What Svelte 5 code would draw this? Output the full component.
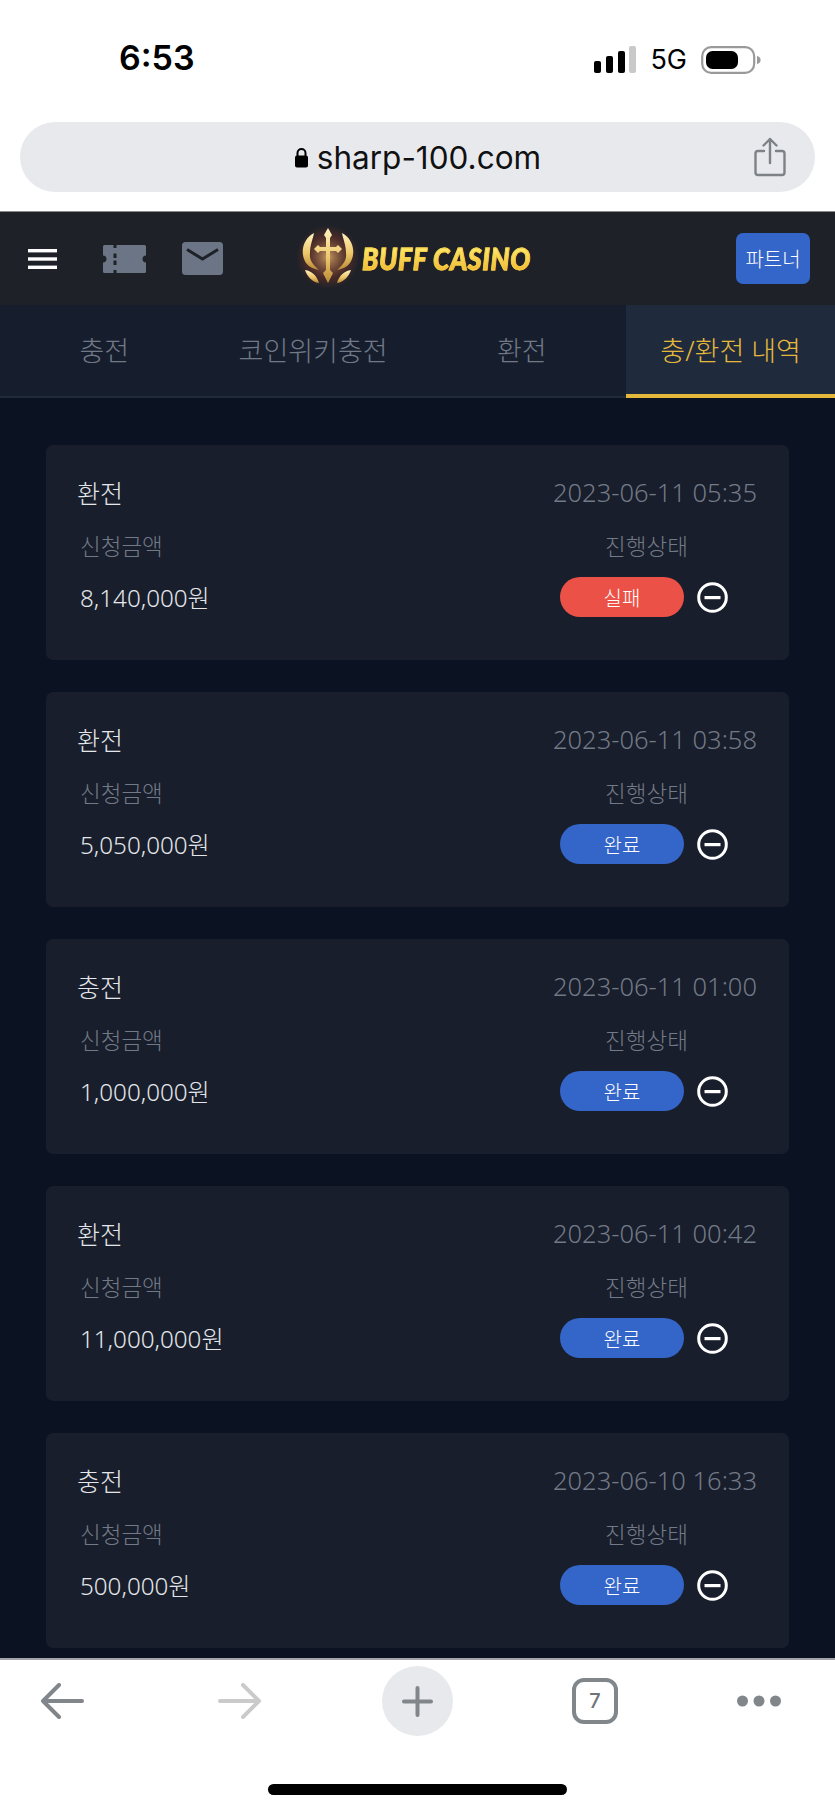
<script lang="ts">
  const tabs = ['충전', '코인위키충전', '환전', '충/환전 내역'];

  const history = [
    { type: '환전', date: '2023-06-11 05:35', amount: '8,140,000원', status: '실패' },
    { type: '환전', date: '2023-06-11 03:58', amount: '5,050,000원', status: '완료' },
    { type: '충전', date: '2023-06-11 01:00', amount: '1,000,000원', status: '완료' },
    { type: '환전', date: '2023-06-11 00:42', amount: '11,000,000원', status: '완료' },
    { type: '충전', date: '2023-06-10 16:33', amount: '500,000원', status: '완료' }
  ];
</script>

<div class="page">
  <div class="statusbar">
    <span class="time">6:53</span>
    <div class="status-right">
      <svg width="42" height="27" viewBox="0 0 42 27">
        <rect x="0" y="15" width="7" height="12" rx="2" fill="#000" />
        <rect x="12" y="10" width="7" height="17" rx="2" fill="#000" />
        <rect x="24" y="5" width="7" height="22" rx="2" fill="#000" />
        <rect x="35" y="0" width="7" height="27" rx="2" fill="#c9c9c9" />
      </svg>
      <span class="net">5G</span>
      <svg width="60" height="28" viewBox="0 0 60 28">
        <rect x="1.200" y="1.200" width="52" height="25.600" rx="9" fill="none" stroke="#9a9a9a" stroke-width="2.200" />
        <rect x="5" y="5" width="32" height="18" rx="6.500" fill="#000" />
        <path d="M56 10c2.400.6 3.600 2 3.600 4s-1.200 3.400-3.600 4z" fill="#9a9a9a" />
      </svg>
    </div>
  </div>

  <div class="urlwrap">
    <div class="urlbar">
      <span class="url">
        <svg width="15" height="21" viewBox="0 0 15 21">
          <path d="M3.500 9V6a4 4 0 0 1 8 0v3" fill="none" stroke="#000" stroke-width="2" />
          <rect x="1" y="8.500" width="13" height="12" rx="2" fill="#000" />
        </svg>
        sharp-100.com
      </span>
      <svg class="share" width="32" height="40" viewBox="0 0 32 40" fill="none" stroke="#7d8287" stroke-width="2.400" stroke-linecap="round" stroke-linejoin="round">
        <path d="M10 14H4a2.500 2.500 0 0 0-2.500 2.500v19A2.500 2.500 0 0 0 4 38h24a2.500 2.500 0 0 0 2.500-2.500v-19A2.500 2.500 0 0 0 28 14h-6" />
        <path d="M16 26V2M9.500 8.500 16 2l6.500 6.500" />
      </svg>
    </div>
  </div>

  <header class="topbar">
    <div class="menu-icons">
      <svg class="burger" width="29" height="20" viewBox="0 0 29 20" fill="#fff">
        <rect x="0" y="0" width="29" height="3.400" />
        <rect x="0" y="8.300" width="29" height="3.400" />
        <rect x="0" y="16.600" width="29" height="3.400" />
      </svg>
      <svg width="43" height="28" viewBox="0 0 43 28">
        <path fill="#6c7585" fill-rule="evenodd" d="M1.500 0H10.500V3H13.500V0H41.500A1.500 1.500 0 0 1 43 1.500V10.500A3.500 3.500 0 0 0 43 17.500V26.500A1.500 1.500 0 0 1 41.500 28H13.500V25H10.500V28H1.500A1.500 1.500 0 0 1 0 26.500V17.500A3.500 3.500 0 0 0 0 10.500V1.500A1.500 1.500 0 0 1 1.500 0ZM10.500 8.500V13H13.500V8.500ZM10.500 15.500V20H13.500V15.500Z" />
      </svg>
      <svg width="41" height="33" viewBox="0 0 41 33">
        <rect width="41" height="33" rx="3.500" fill="#6c7585" />
        <path d="M5 7.500 20.500 17 36 7.500" fill="none" stroke="#1e2128" stroke-width="3" />
      </svg>
    </div>

    <div class="logo">
      <svg width="64" height="64" viewBox="0 0 64 64">
        <defs>
          <radialGradient id="glow">
            <stop offset="0" stop-color="#f0b870" stop-opacity="0.8" />
            <stop offset="0.65" stop-color="#8a3a28" stop-opacity="0.4" />
            <stop offset="1" stop-color="#8a3a28" stop-opacity="0" />
          </radialGradient>
          <linearGradient id="gold" x1="0" y1="0" x2="0" y2="1">
            <stop offset="0" stop-color="#fff4c0" />
            <stop offset="0.55" stop-color="#edc76a" />
            <stop offset="1" stop-color="#b98a36" />
          </linearGradient>
        </defs>
        <circle cx="32" cy="32" r="32" fill="url(#glow)" />
        <path fill="url(#gold)" d="M18 8C8 13 3 27 10 38c3 4 8 6 13 7-6-5-10-10-9-17 0-8 3-14 4-20zM46 8c10 5 15 19 8 30-3 4-8 6-13 7 6-5 10-10 9-17 0-8-3-14-4-20z" />
        <path fill="url(#gold)" d="M32 3l4 7-2 3v9h6l2-2 4 4-4 4-2-2h-6v19l3 3-5 10-5-10 3-3V26h-6l-2 2-4-4 4-4 2 2h6v-9l-2-3z" />
        <path fill="url(#gold)" d="M9 45c7 1 12 6 14 13-7-1-12-7-14-13zM55 45c-7 1-12 6-14 13 7-1 12-7 14-13z" />
      </svg>
      <span class="logo-text">BUFF CASINO</span>
    </div>

    <button class="partner">파트너</button>
  </header>

  <nav class="tabs">
    {#each tabs as tab, i}
      <div class="tab" class:active={i === tabs.length - 1}>{tab}</div>
    {/each}
  </nav>

  <main class="list">
    {#each history as item}
      <section class="card">
        <div class="row top">
          <span class="type">{item.type}</span>
          <span class="date">{item.date}</span>
        </div>
        <div class="row bottom">
          <div class="col">
            <span class="label">신청금액</span>
            <span class="amount">{item.amount}</span>
          </div>
          <div class="col right">
            <span class="label status-label">진행상태</span>
            <div class="state">
              <span class="pill" class:failed={item.status === '실패'}>{item.status}</span>
              <svg width="31" height="31" viewBox="0 0 31 31">
                <circle cx="15.500" cy="15.500" r="13.800" fill="none" stroke="#fff" stroke-width="3" />
                <rect x="7.500" y="14" width="16" height="3.200" fill="#fff" />
              </svg>
            </div>
          </div>
        </div>
      </section>
    {/each}
  </main>

  <footer class="toolbar">
    <div class="tools">
      <svg class="back" width="44" height="36" viewBox="0 0 44 36" fill="none" stroke="#81868b" stroke-width="4" stroke-linecap="round" stroke-linejoin="round">
        <path d="M42 18H3M19 2 3 18l16 16" />
      </svg>
      <svg width="44" height="36" viewBox="0 0 44 36" fill="none" stroke="#cacaca" stroke-width="4" stroke-linecap="round" stroke-linejoin="round">
        <path d="M2 18h39M25 2l16 16-16 16" />
      </svg>
      <div class="plus">
        <svg width="31" height="31" viewBox="0 0 31 31" fill="none" stroke="#81868b" stroke-width="4" stroke-linecap="round">
          <path d="M15.500 2v27M2 15.500h27" />
        </svg>
      </div>
      <div class="tabcount">7</div>
      <svg width="44" height="12" viewBox="0 0 44 12" fill="#81868b">
        <circle cx="5.500" cy="6" r="5.500" />
        <circle cx="22" cy="6" r="5.500" />
        <circle cx="38.500" cy="6" r="5.500" />
      </svg>
    </div>
    <div class="home"></div>
  </footer>
</div>

<style>
  :global(body) {
    margin: 0;
    background: #fff;
  }

  .page {
    width: 835px;
    height: 1810px;
    display: flex;
    flex-direction: column;
    overflow: hidden;
    font-family: "Noto Sans", "Noto Sans CJK KR", sans-serif;
  }

  .statusbar {
    height: 122px;
    box-sizing: border-box;
    padding: 40px 74px 0 119px;
    display: flex;
    justify-content: space-between;
    align-items: flex-start;
    font-family: Inter, "Liberation Sans", sans-serif;
    color: #000;
  }

  .time {
    font-size: 34px;
    font-weight: 600;
    line-height: 36px;
  }

  .status-right {
    display: flex;
    align-items: center;
    gap: 14px;
    padding-top: 3px;
  }

  .net {
    font-size: 27px;
    font-weight: 400;
  }

  .urlwrap {
    height: 89px;
    padding: 0 20px;
  }

  .urlbar {
    position: relative;
    height: 70px;
    border-radius: 35px;
    background: #e8e9ed;
    display: flex;
    align-items: center;
    justify-content: center;
  }

  .url {
    display: flex;
    align-items: center;
    gap: 8px;
    font-family: Inter, "Liberation Sans", sans-serif;
    font-size: 31.500px;
    color: #111;
  }

  .share {
    position: absolute;
    right: 29px;
    top: 15px;
  }

  .topbar {
    height: 94px;
    box-sizing: border-box;
    border-top: 1px solid #8a8a8a;
    background: #1e2128;
    position: relative;
    display: flex;
    align-items: center;
    justify-content: space-between;
    padding: 0 25px 0 28px;
  }

  .menu-icons {
    display: flex;
    align-items: center;
    gap: 36px;
  }

  .burger {
    margin-right: 10px;
  }

  .logo {
    position: absolute;
    left: 296px;
    top: 13px;
    display: flex;
    align-items: center;
    gap: 2px;
  }

  .logo-text {
    font-family: Lato, sans-serif;
    font-size: 26.500px;
    font-weight: 900;
    font-style: italic;
    letter-spacing: 0.600px;
    transform: translateY(2px) scale(1, 1.120);
    background: linear-gradient(#ffe968 20%, #f0b832 85%);
    -webkit-background-clip: text;
    background-clip: text;
    color: transparent;
    -webkit-text-stroke: 0.700px #f8d048;
  }

  .partner {
    width: 74px;
    height: 51px;
    border: 0;
    padding: 0;
    border-radius: 7px;
    background: #3465c8;
    color: #fff;
    font-family: inherit;
    font-size: 20px;
    font-weight: 300;
  }

  .tabs {
    height: 93px;
    box-sizing: border-box;
    display: grid;
    grid-template-columns: repeat(4, 1fr);
    background: #161e2e;
    border-bottom: 2px solid #1f2a3d;
  }

  .tab {
    display: flex;
    align-items: center;
    justify-content: center;
    font-size: 27px;
    font-weight: 300;
    color: #727986;
    box-sizing: border-box;
    height: 93px;
    padding-bottom: 4px;
  }

  .tab.active {
    background: #1f2a3d;
    color: #e4b93b;
    border-bottom: 4px solid #e4b93b;
    padding-bottom: 0;
  }

  .list {
    flex: 1;
    min-height: 0;
    background: #0b1222;
    padding: 47px 46px 0;
    display: flex;
    flex-direction: column;
    gap: 32px;
  }

  .card {
    height: 215px;
    box-sizing: border-box;
    border-radius: 7px;
    background: #181e2b;
    padding: 30px 32px 0 31px;
  }

  .row {
    display: flex;
    justify-content: space-between;
  }

  .top {
    align-items: center;
    height: 34px;
  }

  .type {
    font-size: 25px;
    font-weight: 300;
    color: #e4e6ea;
  }

  .date {
    font-size: 25.500px;
    font-weight: 300;
    color: #727987;
  }

  .bottom {
    margin-top: 23px;
    padding-left: 3px;
    padding-right: 29px;
  }

  .col {
    display: flex;
    flex-direction: column;
    gap: 15px;
  }

  .col.right {
    align-items: center;
  }

  .status-label {
    margin-left: 5px;
  }

  .label {
    font-size: 22.500px;
    font-weight: 300;
    line-height: 30px;
    color: #737a87;
  }

  .amount {
    font-size: 24.200px;
    font-weight: 300;
    line-height: 40px;
    color: #e4e6ea;
    transform: translateY(1px);
  }

  .state {
    display: flex;
    align-items: center;
    gap: 13px;
  }

  .pill {
    width: 124px;
    height: 40px;
    border-radius: 20px;
    background: #3465c8;
    color: #fff;
    font-size: 20px;
    font-weight: 300;
    display: flex;
    align-items: center;
    justify-content: center;
  }

  .pill.failed {
    background: #ec5147;
  }

  .toolbar {
    height: 152px;
    box-sizing: border-box;
    border-top: 2px solid #a3a5aa;
    background: #fff;
    position: relative;
  }

  .tools {
    height: 70px;
    margin-top: 6px;
    padding-left: 40px;
    display: flex;
    align-items: center;
    gap: 119px;
  }

  .back {
    margin-right: 15px;
  }

  .plus {
    width: 71px;
    height: 70px;
    margin-left: 1px;
    border-radius: 50%;
    background: #e8e9ed;
    display: flex;
    align-items: center;
    justify-content: center;
  }

  .tabcount {
    width: 46px;
    height: 46px;
    box-sizing: border-box;
    border: 4px solid #81868b;
    border-radius: 12px;
    display: flex;
    align-items: center;
    justify-content: center;
    font-family: Inter, sans-serif;
    font-size: 20px;
    font-weight: 500;
    color: #6f7479;
  }

  .home {
    position: absolute;
    left: 268px;
    top: 124px;
    width: 299px;
    height: 11px;
    border-radius: 6px;
    background: #000;
  }
</style>
